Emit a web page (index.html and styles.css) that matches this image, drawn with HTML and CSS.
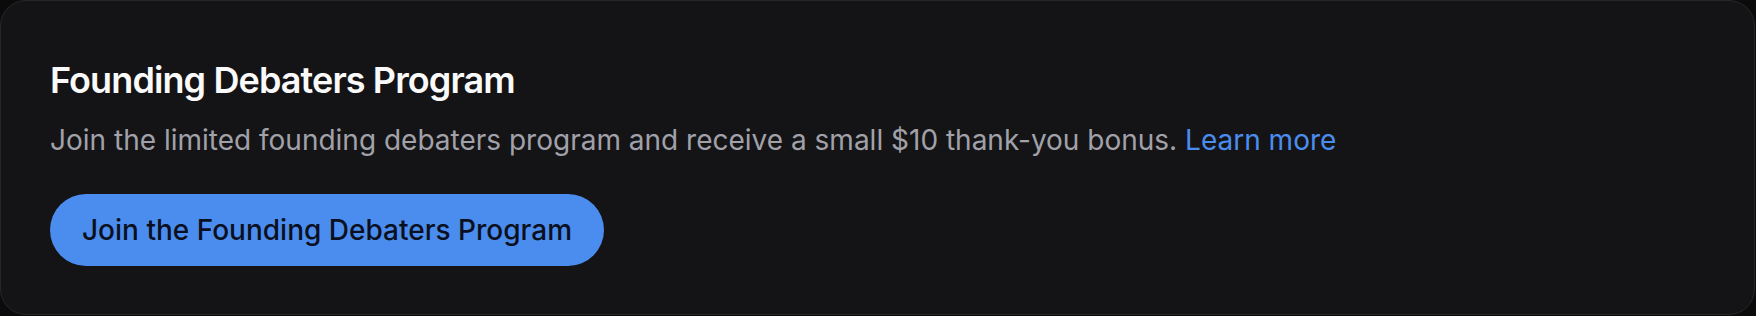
FILE: index.html
```html
<!DOCTYPE html>
<html lang="en">
<head>
<meta charset="utf-8">
<title>Founding Debaters Program</title>
<link rel="stylesheet" href="styles.css">
</head>
<body>
  <section class="card">
    <h2 class="card-title">Founding Debaters Program</h2>
    <p class="card-text">Join the limited founding debaters program and receive a small $10 thank-you bonus. <a class="card-link" href="#">Learn more</a></p>
    <button class="card-button" type="button">Join the Founding Debaters Program</button>
  </section>
</body>
</html>
```

FILE: styles.css
```css
* { box-sizing: border-box; }
html, body {
  margin: 0;
  padding: 0;
  background: #0b0b0c;
}
body {
  width: 1756px;
  height: 316px;
  font-family: Inter, "Noto Sans", sans-serif;
}
.card {
  width: 1755px;
  height: 315px;
  background: #141416;
  border: 1.5px solid #27272a;
  border-radius: 26px;
  padding: 57px 49px 0 49px;
  display: flex;
  flex-direction: column;
  align-items: flex-start;
}
.card-title {
  margin: 0;
  font-size: 36px;
  font-weight: 600;
  line-height: 44px;
  letter-spacing: -0.9px;
  color: #fafafa;
}
.card-text {
  margin: 18px 0 0 0;
  font-size: 28px;
  line-height: 40px;
  color: #a1a1aa;
}
.card-link {
  color: #4b8def;
  text-decoration: none;
}
.card-button {
  margin-top: 34px;
  height: 72px;
  padding: 0 32px;
  border: none;
  border-radius: 36px;
  background: #4b8dee;
  color: #0b1020;
  font-family: inherit;
  font-size: 28px;
  font-weight: 500;
  cursor: pointer;
}
```
